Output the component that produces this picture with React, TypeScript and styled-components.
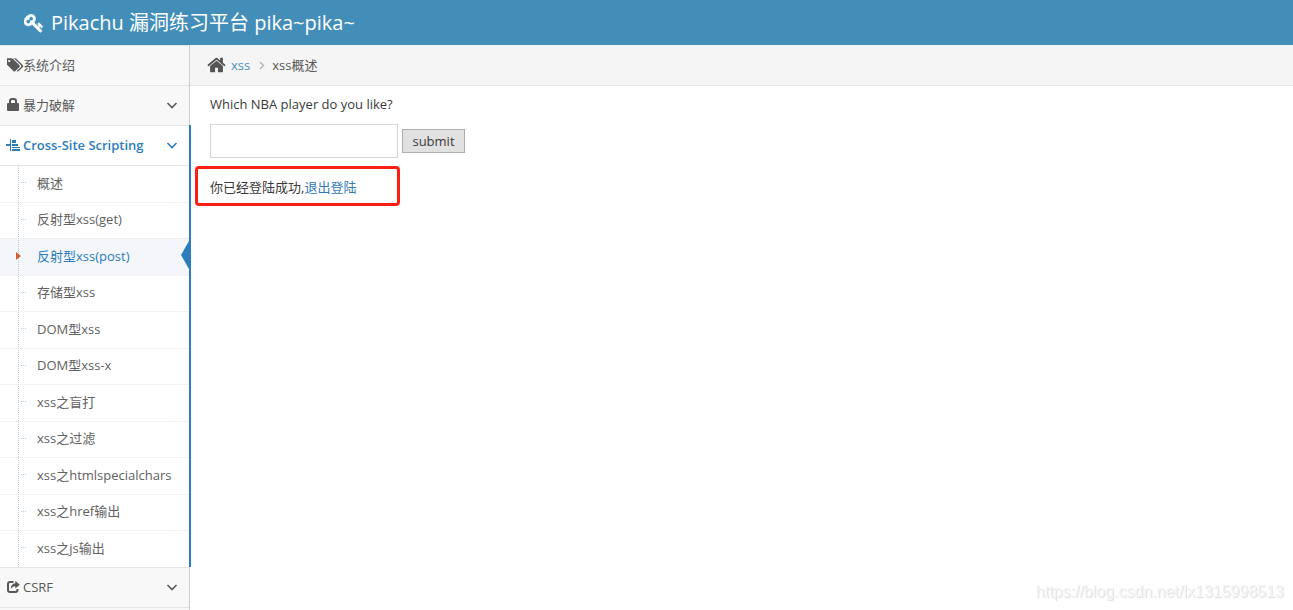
import React from 'react';
import styled, { createGlobalStyle, css } from 'styled-components';

const GlobalStyle = createGlobalStyle`
  *, *::before, *::after { box-sizing: border-box; }
  body {
    margin: 0;
    background: #fff;
    color: #393939;
    font-family: "Open Sans", "Noto Sans CJK SC", sans-serif;
    font-size: 13px;
    line-height: 20px;
  }
  ul, ol, p { margin: 0; padding: 0; list-style: none; }
  a { text-decoration: none; }
`;

const Page = styled.div`
  display: flex;
  flex-direction: column;
  height: 100vh;
  overflow: hidden;
`;

const Header = styled.header`
  display: flex;
  flex: none;
  align-items: center;
  height: 45px;
  padding: 0 24px;
  background: #438eb9;
`;

const Brand = styled.a`
  display: flex;
  align-items: center;
  gap: 7px;
  color: #fff;
  font-size: 20px;
  line-height: 24px;
  white-space: nowrap;
`;

const Body = styled.div`
  display: flex;
  flex: 1;
  min-height: 0;
`;

const Sidebar = styled.nav`
  flex: none;
  width: 190px;
  border-right: 1px solid #ccc;
  background: #f8f8f8;
`;

const SectionList = styled.ul`
  border-top: 1px solid #e5e5e5;
`;

const Section = styled.li<{ $open?: boolean }>`
  position: relative;
  border-bottom: 1px solid #e5e5e5;
  ${({ $open }) =>
    $open &&
    css`
      background: #fff;
      &::after {
        content: "";
        position: absolute;
        top: -1px;
        right: -2px;
        bottom: 0;
        width: 2px;
        background: #2b7dbc;
      }
    `}
`;

const SectionLink = styled.a<{ $open?: boolean }>`
  display: flex;
  align-items: center;
  height: ${({ $open }) => ($open ? 40 : 39)}px;
  padding: 0 11px 2px 7px;
  color: ${({ $open }) => ($open ? '#2b7dbc' : '#585858')};
  font-weight: ${({ $open }) => ($open ? 600 : 400)};
  border-bottom: ${({ $open }) => ($open ? '1px solid #e5e5e5' : 'none')};
  white-space: nowrap;
`;

const IconSlot = styled.span`
  display: flex;
  flex: none;
  width: 16px;
`;

const Label = styled.span`
  flex: 1;
`;

const Icon = styled.svg`
  display: block;
  flex: none;
  fill: currentColor;
`;

const Submenu = styled.ul`
  position: relative;
  &::before {
    content: "";
    position: absolute;
    z-index: 1;
    top: 0;
    bottom: 0;
    left: 18px;
    border-left: 1px dotted #b4cde0;
  }
`;

const SubLink = styled.a<{ $current?: boolean }>`
  display: block;
  padding: 7px 0 0 37px;
  color: ${({ $current }) => ($current ? '#2b7dbc' : '#616161')};
  white-space: nowrap;
`;

const SubItem = styled.li<{ $current?: boolean }>`
  position: relative;
  height: 36px;
  border-top: 1px dotted #e8e8e8;
  &:nth-child(odd) { height: 37px; }
  &:nth-child(even) ${SubLink} { padding-top: 6px; }
  &:first-child { height: 36px; border-top: 0; }
  &::before {
    content: "";
    position: absolute;
    top: 16px;
    left: 21px;
    width: 5px;
    border-top: 1px dotted #bccfe0;
  }
  ${({ $current }) =>
    $current &&
    css`
      background: #f4f6fa;
      &::before {
        z-index: 2;
        top: 13px;
        left: 16px;
        width: 0;
        border: 4px solid transparent;
        border-left: 5px solid #c86139;
        border-right: 0;
      }
      &::after {
        content: "";
        position: absolute;
        top: 2px;
        right: 0;
        border: 14px solid transparent;
        border-right: 8px solid #2b7dbc;
        border-left: 0;
      }
    `}
`;

const Main = styled.main`
  flex: 1;
  min-width: 0;
`;

const Breadcrumbs = styled.ol`
  display: flex;
  align-items: center;
  height: 41px;
  padding: 0 17px;
  border-bottom: 1px solid #e5e5e5;
  background: #f5f5f5;
  color: #555;
`;

const Crumb = styled.li`
  display: flex;
  align-items: center;
`;

const CrumbLink = styled.a`
  margin-left: 5px;
  color: #4c8fbd;
`;

const Separator = styled.span`
  display: flex;
  justify-content: center;
  width: 22px;
  color: #b2b6bf;
`;

const Content = styled.div`
  padding: 8px 20px;
`;

const Form = styled.form`
  display: flex;
  flex-wrap: wrap;
  align-items: center;
  gap: 0 4px;
`;

const Question = styled.label`
  flex-basis: 100%;
  margin-bottom: 10px;
`;

const TextInput = styled.input`
  width: 188px;
  height: 34px;
  padding: 5px 4px;
  border: 1px solid #d5d5d5;
  border-radius: 0;
  background: #fff;
  color: #858585;
  font: inherit;
`;

const SubmitButton = styled.button`
  min-width: 63px;
  height: 24px;
  padding: 0 9px;
  border: 1px solid #adadad;
  border-radius: 0;
  background: #e1e1e1;
  color: #393939;
  font: inherit;
`;

const Notice = styled.p`
  width: 205px;
  margin: 8px 0 0 -15px;
  padding: 8px 12px 6px;
  border: 3px solid #fc2012;
  border-radius: 4px;
`;

const NoticeLink = styled.a`
  color: #337ab7;
`;

const Watermark = styled.div`
  position: fixed;
  right: 9px;
  bottom: 9px;
  color: #f4f4f4;
  font-family: "Liberation Sans", sans-serif;
  font-size: 16px;
  line-height: 18px;
  text-shadow: 1px 1px 1px #ddd;
  pointer-events: none;
`;

const AngleDown = () => (
  <Icon width="12" height="12" viewBox="0 0 12 12" aria-hidden="true">
    <path d="M1.500 4L6 8.500 10.500 4" fill="none" stroke="currentColor" strokeWidth="1.600" />
  </Icon>
);

const TagsIcon = () => (
  <Icon width="17" height="16" viewBox="0 0 1920 1792" aria-hidden="true">
    <path d="M384 448q0-53-37.500-90.500t-90.500-37.500-90.500 37.500-37.500 90.500 37.500 90.500 90.500 37.500 90.500-37.500 37.500-90.500zm1067 576q0 53-37 90l-491 492q-39 37-91 37-53 0-90-37l-715-716q-38-37-64.500-101t-26.500-117v-416q0-52 38-90t90-38h416q53 0 117 26.500t102 64.500l715 714q37 39 37 91zm384 0q0 53-37 90l-491 492q-39 37-91 37-36 0-59-14t-53-45l470-470q37-37 37-90 0-52-37-91l-715-714q-38-38-102-64.500t-117-26.500h224q53 0 117 26.500t102 64.500l715 714q37 39 37 91z" />
  </Icon>
);

const LockIcon = () => (
  <Icon width="13" height="14" viewBox="1 0 13 14" aria-hidden="true">
    <path
      fillRule="evenodd"
      d="M3 5V3a3 3 0 0 1 3-3h2a3 3 0 0 1 3 3v2h1q1 0 1 1v6q0 1-1 1H2q-1 0-1-1V6q0-1 1-1zM5 5h4V3.300q0-1.300-1.300-1.300H6.300Q5 2 5 3.300z"
    />
  </Icon>
);

const AlignIcon = () => (
  <Icon width="14" height="14" viewBox="1 0 14 14" overflow="visible" aria-hidden="true">
    <path d="M0 6h4v2H0zM4 1h1v12H4zM6 2h4v3H6zM6 6h6v2H6zM6 9h8v1H6zM6 11h8v2H6z" />
  </Icon>
);

const ShareIcon = () => (
  <Icon width="14" height="14" viewBox="1 0 14 14" aria-hidden="true">
    <path
      d="M7.500 2H4Q2 2 2 4v6q0 2 2 2h5.500q2 0 2-2V9"
      fill="none"
      stroke="currentColor"
      strokeWidth="2"
    />
    <path d="M9.300 .8l4.500 3.900-4.500 3.800V6.300Q6.500 6.100 4.600 9 4.900 3.700 9.300 3.200z" />
  </Icon>
);

const KeyIcon = () => (
  <Icon width="20" height="20" viewBox="0 0 1792 1792" aria-hidden="true">
    <path
      stroke="currentColor"
      strokeWidth="60"
      d="M832 512q0-80-56-136t-136-56-136 56-56 136q0 42 19 83-41-19-83-19-80 0-136 56t-56 136 56 136 136 56 136-56 56-136q0-42-19-83 41 19 83 19 80 0 136-56t56-136zm851 704q0 17-49 66t-66 49q-9 0-28.500-16t-36.500-33-38.500-40-24.500-26l-96 96 220 220q28 28 28 68 0 42-39 81t-81 39q-40 0-68-28l-671-671q-176 131-365 131-163 0-265.500-102.500t-102.500-265.500q0-160 95-313t248-248 313-95q163 0 265.500 102.500t102.500 265.500q0 189-131 365l355 355 96-96q-3-3-26-24.500t-40-38.500-33-36.500-16-28.500q0-17 49-66t66-49q13 0 23 10 6 6 46 44.500t82 79.500 86.500 86 73 78 28.500 41z"
    />
  </Icon>
);

const HomeIcon = () => (
  <Icon width="19" height="20" viewBox="64 0 1664 1792" aria-hidden="true">
    <path d="M1472 992v480q0 26-19 45t-45 19h-384v-384h-256v384h-384q-26 0-45-19t-19-45v-480q0-1 .5-3t.5-3l575-474 575 474q1 2 1 6zm223-69l-62 74q-8 9-21 11h-3q-13 0-21-7l-692-577-692 577q-12 8-24 7-13-2-21-11l-62-74q-8-10-7-23.500t11-21.500l719-599q32-26 76-26t76 26l244 204v-195q0-14 9-23t23-9h192q14 0 23 9t9 23v408l219 182q10 8 11 21.500t-7 23.500z" />
  </Icon>
);

const AngleRight = () => (
  <Icon width="12" height="12" viewBox="0 0 12 12" aria-hidden="true">
    <path d="M5 3L8.500 6.500 5 10" fill="none" stroke="currentColor" strokeWidth="1.500" />
  </Icon>
);

const xssPages = [
  '概述',
  '反射型xss(get)',
  '反射型xss(post)',
  '存储型xss',
  'DOM型xss',
  'DOM型xss-x',
  'xss之盲打',
  'xss之过滤',
  'xss之htmlspecialchars',
  'xss之href输出',
  'xss之js输出',
];

const currentPage = '反射型xss(post)';

const sections = [
  { label: '系统介绍', icon: <TagsIcon /> },
  { label: '暴力破解', icon: <LockIcon />, expandable: true },
  { label: 'Cross-Site Scripting', icon: <AlignIcon />, expandable: true, pages: xssPages },
  { label: 'CSRF', icon: <ShareIcon />, expandable: true },
];

export default function App() {
  return (
    <Page>
      <GlobalStyle />
      <Header>
        <Brand href="#">
          <KeyIcon />
          <span>Pikachu 漏洞练习平台 pika~pika~</span>
        </Brand>
      </Header>
      <Body>
        <Sidebar>
          <SectionList>
            {sections.map(({ label, icon, expandable, pages }) => (
              <Section key={label} $open={!!pages}>
                <SectionLink href="#" $open={!!pages}>
                  <IconSlot>{icon}</IconSlot>
                  <Label>{label}</Label>
                  {expandable && <AngleDown />}
                </SectionLink>
                {pages && (
                  <Submenu>
                    {pages.map((page) => (
                      <SubItem key={page} $current={page === currentPage}>
                        <SubLink href="#" $current={page === currentPage}>
                          {page}
                        </SubLink>
                      </SubItem>
                    ))}
                  </Submenu>
                )}
              </Section>
            ))}
          </SectionList>
        </Sidebar>
        <Main>
          <Breadcrumbs>
            <Crumb>
              <HomeIcon />
              <CrumbLink href="#">xss</CrumbLink>
            </Crumb>
            <Crumb>
              <Separator>
                <AngleRight />
              </Separator>
              xss概述
            </Crumb>
          </Breadcrumbs>
          <Content>
            <Form onSubmit={(e) => e.preventDefault()}>
              <Question htmlFor="player">Which NBA player do you like?</Question>
              <TextInput id="player" type="text" name="message" />
              <SubmitButton type="submit">submit</SubmitButton>
            </Form>
            <Notice>
              你已经登陆成功,<NoticeLink href="#">退出登陆</NoticeLink>
            </Notice>
          </Content>
        </Main>
      </Body>
      <Watermark>https://blog.csdn.net/lx1315998513</Watermark>
    </Page>
  );
}
